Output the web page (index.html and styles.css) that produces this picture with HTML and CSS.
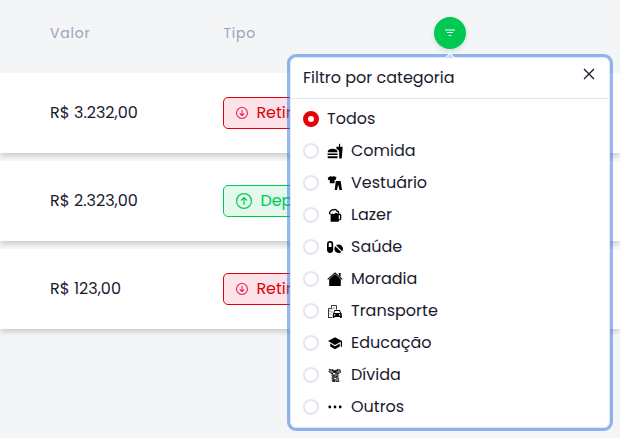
FILE: index.html
```html
<!DOCTYPE html>
<html lang="pt-BR">
<head>
<meta charset="utf-8">
<title>Transações</title>
<link rel="stylesheet" href="styles.css">
</head>
<body>
<main class="table">
  <header class="row head">
    <span class="value">Valor</span><span class="kind">Tipo</span>
    <button class="filter" aria-label="Filtrar"><svg width="12" height="12" viewBox="0 0 12 12" fill="none" stroke="#fff"><path d="M1 3h10" stroke-width="1.6" opacity=".6"/><path d="M3 5.5h6"/><path d="M4.5 8.5h3" opacity=".8"/></svg></button>
  </header>
  <section class="row item"><span class="value">R$ 3.232,00</span><span class="badge out"><svg width="12" height="12" viewBox="0 0 16 16" fill="none" stroke="currentColor" stroke-width="1.4"><circle cx="8" cy="8" r="7.3"/><path d="M8 4v7.5M5 8.5l3 3 3-3"/></svg>Retirada</span></section>
  <section class="row item"><span class="value">R$ 2.323,00</span><span class="badge in"><svg width="16" height="16" viewBox="0 0 16 16" fill="none" stroke="currentColor" stroke-width="1.2"><circle cx="8" cy="8" r="7.4"/><path d="M8 12V4.5M5 7.5l3-3 3 3"/></svg>Depósito</span></section>
  <section class="row item"><span class="value">R$ 123,00</span><span class="badge out"><svg width="12" height="12" viewBox="0 0 16 16" fill="none" stroke="currentColor" stroke-width="1.4"><circle cx="8" cy="8" r="7.3"/><path d="M8 4v7.5M5 8.5l3 3 3-3"/></svg>Retirada</span></section>
</main>
<aside class="popover">
  <i class="arrow"></i>
  <header class="title"><span>Filtro por categoria</span><svg class="close" width="12" height="12" viewBox="0 0 12 12" stroke="#16162b" stroke-width="1.3"><path d="M1 1l10 10M11 1L1 11"/></svg></header>
  <div class="options">
    <label class="option"><i class="radio on"></i><span>Todos</span></label>
    <label class="option"><i class="radio"></i><svg viewBox="0 0 16 16"><path d="M9.3 3.8h2.6V1.2l1.2-.6v3.2h2.6l-1 11.6h-2.5V9.6c0-2-1.2-3.2-2.7-3.7zM.6 9.2C.8 6.8 3 5.8 5.6 5.8s4.8 1 5 3.4zM.6 10.5h10v1.4H.6zM.6 13.2h10v.7c0 .8-.5 1.3-1.2 1.3H1.8c-.8 0-1.2-.5-1.2-1.3z"/></svg><span>Comida</span></label>
    <label class="option"><i class="radio"></i><svg viewBox="0 0 16 16"><path d="M3.7 1c.6 1 2.2 1 2.8 0l3 1.3-.8 2.8-1.1-.3v3.4H2.8V4.8l-1.4.4L.7 2.7z"/><path d="M8.8 6h4.8l1.4 9h-2.5l-1.4-5.5L10 15H7.7z"/></svg><span>Vestuário</span></label>
    <label class="option"><i class="radio"></i><svg viewBox="0 0 16 16"><path d="M3.6 7.3C2 6.8 2.2 5 3.5 4.6 3.8 3 5.3 2.4 6.6 3c1.3-1 3-.4 3.3 1 1.4.1 2 1.3 1.6 2.6" fill="none" stroke="#000" stroke-width="1.3"/><path fill-rule="evenodd" d="M3.6 7.4l2-1 1.4.8 1.6-1.4 3.2 1h1c.9 0 1.5.6 1.5 1.5v3.5c0 .9-.6 1.5-1.5 1.5h-1v1.4H3.6zm8.2.8v4h1.2v-4z"/></svg><span>Lazer</span></label>
    <label class="option"><i class="radio"></i><svg viewBox="0 0 16 16"><path fill-rule="evenodd" d="M0 5.2a3.1 3.1 0 016.2 0v5.6a3.1 3.1 0 01-6.2 0zm1.7 0V8h2.8V5.2a1.4 1.4 0 00-2.8 0z"/><circle cx="11.7" cy="9.7" r="4.3"/><path d="M8.2 6.3l7 6.8" stroke="#fff" stroke-width="1.2"/></svg><span>Saúde</span></label>
    <label class="option"><i class="radio"></i><svg viewBox="0 0 16 16"><path d="M8 3l5.8 5.2V15H2.2V8.2z"/><path d="M.7 8.4L8 1.9l7.3 6.5" fill="none" stroke="#000" stroke-width="1.1"/><path d="M11.8 2h1.8v3.8l-1.8-1.6z"/></svg><span>Moradia</span></label>
    <label class="option"><i class="radio"></i><svg viewBox="0 0 16 16"><path d="M1.5 14.5v-9h3v-3h5v4M3 7.5v1m0 2v1m2-6v1m2-2v1m-2 3v1M1 14.5h4" fill="none" stroke="#222" stroke-width=".9"/><path fill-rule="evenodd" d="M7.5 7h5.4l1.2 3 .7.8V15h-1.7v-1H7.3v1H5.8v-4.2l.7-.8zm.7 1l-.8 2h5.8l-.9-2zM7 11.2v1.2h1.3v-1.2zm5 0v1.2h1.3v-1.2z"/></svg><span>Transporte</span></label>
    <label class="option"><i class="radio"></i><svg viewBox="0 0 16 16"><path d="M8 2.2L1 6l7 4 5.8-3.2v5H15V6zM3.2 8.6v3L8 14.3l4.8-2.7v-3L8 11.3z"/></svg><span>Educação</span></label>
    <label class="option"><i class="radio"></i><svg viewBox="0 0 16 16"><path d="M2.2 2.5h2.6L8 3.6l3-1.4 2.5 1v2.3L11 7v2.5l1 5H5.3L5 7 2.2 5z" fill="#777" stroke="#111" stroke-width=".9" stroke-dasharray="2 .6"/><path d="M5 3l6 4M11 3L5 7m2 1v6m3-5l-3 4" fill="none" stroke="#000"/><path d="M6 6h2v1H6zm1 5h2v1H7z" fill="#fff"/></svg><span>Dívida</span></label>
    <label class="option"><i class="radio"></i><svg viewBox="0 0 16 16"><circle cx="2.8" cy="8" r="1.4"/><circle cx="8" cy="8" r="1.4"/><circle cx="13.2" cy="8" r="1.4"/></svg><span>Outros</span></label>
  </div>
</aside>
</body>
</html>
```
FILE: styles.css
```css
* { box-sizing: border-box; }
body { margin: 0; width: 620px; height: 438px; overflow: hidden; position: relative; background: #f3f5f7; color: #1a1a2e; font: 16px/24px Poppins, Inter, sans-serif; }
.table { display: flex; flex-direction: column; gap: 8px; }
.row { display: flex; align-items: center; height: 80px; padding-left: 50px; }
.head { height: 65px; color: #a09fba; font-size: 14px; letter-spacing: .8px; }
.item { background: #fff; box-shadow: 0 4px 5px -1px rgba(0, 0, 0, .17); }
.value { width: 173.4px; white-space: nowrap; }
.kind { width: 210.6px; }
.filter { display: flex; align-items: center; justify-content: center; width: 32px; height: 32px; padding: 0; border: 0; border-radius: 50%; background: #00c853; box-shadow: 0 2px 5px rgba(0, 0, 0, .12); }
.badge { display: flex; align-items: center; gap: 8px; width: 112px; height: 32px; padding-left: 12px; border: 1px solid; border-radius: 5px; }
.out { color: #e30009; background: #fde3e9; }
.out svg { color: #e31a4b; }
.in { color: #00c853; background: #e2f9ec; }
.popover { position: absolute; left: 290px; top: 57px; width: 320px; height: 371px; border: 1px solid #e2e8f0; border-radius: 6px; background: #fff; box-shadow: 0 0 0 3px rgba(49, 120, 230, .53); }
.arrow { position: absolute; left: 155px; top: -4px; width: 8px; height: 8px; transform: rotate(45deg); background: #c8d9f5; border: solid #fff; border-width: 1px 0 0 1px; clip-path: polygon(0 0, 100% 0, 0 100%); }
.title { display: flex; justify-content: space-between; height: 41px; padding: 8px 14px 8px 12px; border-bottom: 1px solid #e2e5f0; }
.close { margin-top: 2px; }
.options { display: flex; flex-direction: column; gap: 8px; padding: 8px 12px; }
.option { display: flex; align-items: center; gap: 8px; height: 24px; }
.option svg { width: 16px; height: 16px; }
.radio { width: 16px; height: 16px; border: 2px solid #e2e6f1; border-radius: 50%; }
.radio.on { border: 5px solid #e60005; }
```
